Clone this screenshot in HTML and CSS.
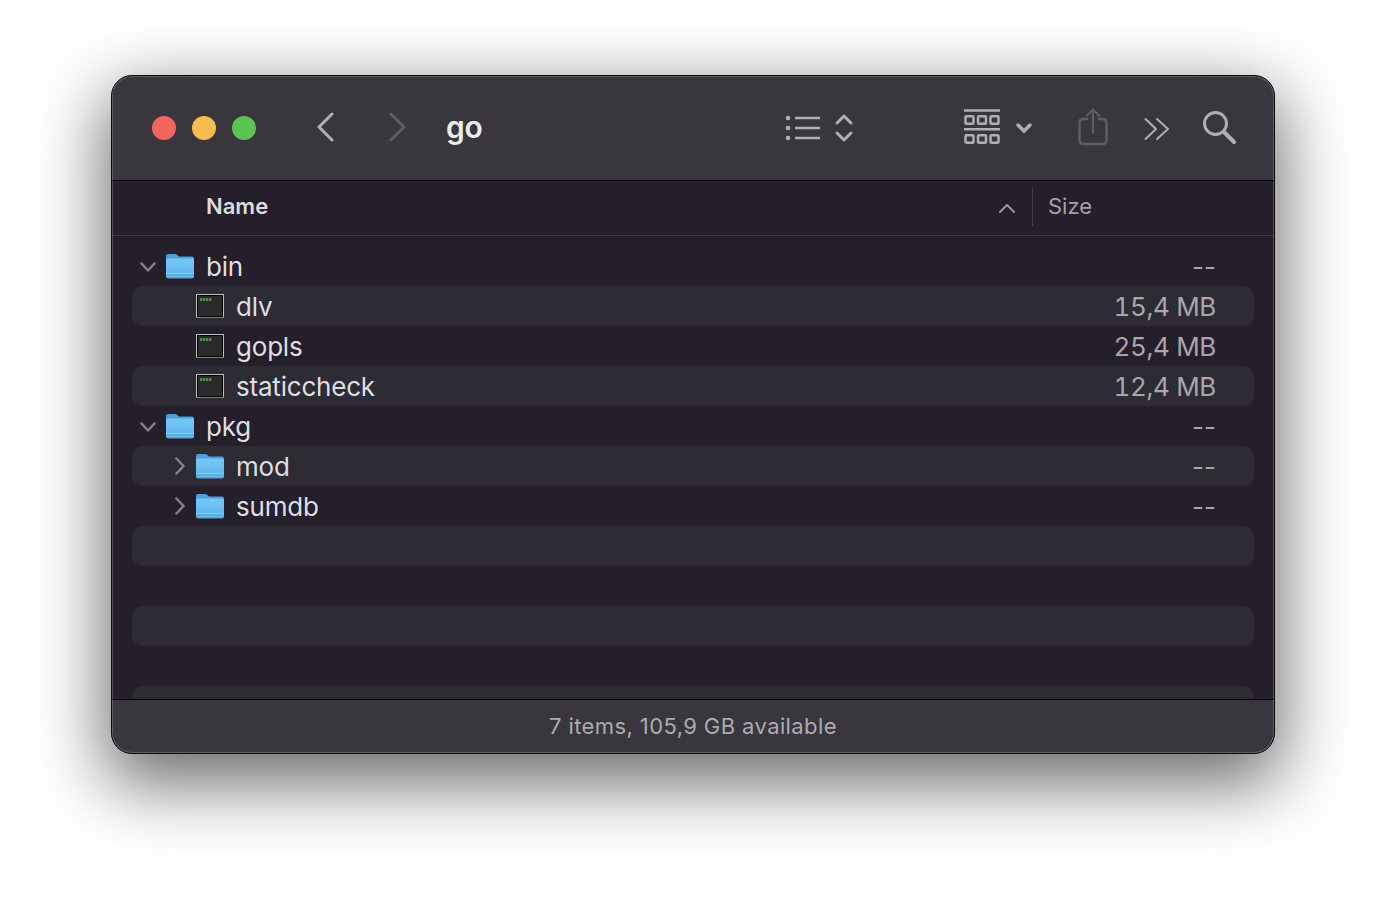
FILE: index.html
```html
<!DOCTYPE html>
<html lang="en">
<head>
<meta charset="utf-8">
<title>go</title>
<link rel="stylesheet" href="styles.css">
</head>
<body>
<svg class="defs" width="0" height="0" aria-hidden="true">
  <defs>
    <linearGradient id="folderBody" x1="0" y1="0" x2="0" y2="1">
      <stop offset="0" stop-color="#76c8f6"/>
      <stop offset="0.7" stop-color="#64b9ed"/>
      <stop offset="1" stop-color="#4f9fd9"/>
    </linearGradient>
    <symbol id="folder" viewBox="0 0 28 26">
      <path d="M0 3q0-2 2-2h7q1.500 0 2.500 1l1.500 1.500h13q2 0 2 2V8H0z" fill="#4a9fdc"/>
      <path d="M0 7q0-1.500 1.500-1.500h25q1.500 0 1.500 1.500v16.500q0 2-2 2H2q-2 0-2-2z" fill="url(#folderBody)"/>
      <rect x="0" y="20" width="28" height="1" fill="#a2d8f6" opacity=".55"/>
      <rect x="0" y="23" width="28" height="1" fill="#a2d8f6" opacity=".35"/>
    </symbol>
    <symbol id="exec" viewBox="0 0 28 24">
      <rect width="28" height="24" fill="#bdbdbf"/>
      <rect y="23" width="28" height="1" fill="#7d7d7f"/>
      <rect x="1" y="1" width="26" height="22" fill="#000"/>
      <rect x="2" y="2" width="24" height="20" fill="#2a2a2a"/>
      <path d="M4 4h2.300v3H4zM7 4h2.300v3H7zM10 4h2.300v3H10zM13 4h2.300v3H13z" fill="#3f9445"/>
    </symbol>
  </defs>
</svg>
<main class="window">
  <header class="toolbar">
    <div class="lights">
      <span class="light red"></span>
      <span class="light yellow"></span>
      <span class="light green"></span>
    </div>
    <svg class="icon nav-back" width="18" height="30" viewBox="0 0 18 30"><path d="M16 2 3 15l13 13" class="stroke s3"/></svg>
    <svg class="icon nav-forward" width="18" height="30" viewBox="0 0 18 30"><path d="m2 2 13 13L2 28" class="stroke s3 dim"/></svg>
    <h1 class="title">go</h1>
    <svg class="icon view-list" width="36" height="26" viewBox="0 0 36 26"><circle cx="3" cy="3" r="2.300" class="fill"/><circle cx="3" cy="13" r="2.300" class="fill"/><circle cx="3" cy="23" r="2.300" class="fill"/><path d="M10 3h25M10 13h25M10 23h25" class="stroke s25 butt"/></svg>
    <svg class="icon updown" width="18" height="30" viewBox="0 0 18 30"><path d="m2 10 7-7 7 7M2 20l7 7 7-7" class="stroke s3"/></svg>
    <svg class="icon group" width="36" height="36" viewBox="0 0 36 36"><path d="M0 1.500h36M0 20.300h36" class="stroke s25 butt"/><g class="stroke s25"><rect x="1.500" y="7.250" width="8" height="7.500" rx="1"/><rect x="14" y="7.250" width="8" height="7.500" rx="1"/><rect x="26.500" y="7.250" width="8" height="7.500" rx="1"/><rect x="1.500" y="26.250" width="8" height="7.500" rx="1"/><rect x="14" y="26.250" width="8" height="7.500" rx="1"/><rect x="26.500" y="26.250" width="8" height="7.500" rx="1"/></g></svg>
    <svg class="icon group-caret" width="16" height="12" viewBox="0 0 16 12"><path d="m2 3 6 6 6-6" class="stroke s35"/></svg>
    <svg class="icon share" width="30" height="38" viewBox="0 0 30 38"><path d="M9 11H5.500q-4 0-4 4v17q0 4 4 4h19q4 0 4-4V15q0-4-4-4H21" class="stroke s25 dim"/><path d="M15 25V2M8.500 8 15 1.500 21.500 8" class="stroke s2 dim"/></svg>
    <svg class="icon more" width="26" height="24" viewBox="0 0 26 24"><path d="M1.500 2 12 12 1.500 22M13 2l11 10-11 10" class="stroke s2"/></svg>
    <svg class="icon search" width="34" height="34" viewBox="0 0 34 34"><circle cx="12.500" cy="12.500" r="11" class="stroke s3"/><path d="m21 21 10 10" class="stroke s4"/></svg>
  </header>

  <div class="columns">
    <span class="col-name">Name</span>
    <svg class="sort" width="16" height="10" viewBox="0 0 16 10"><path d="m1 9 7-7 7 7" class="stroke s2 mid"/></svg>
    <span class="col-divider"></span>
    <span class="col-size">Size</span>
  </div>

  <div class="list">
    <div class="row">
      <svg class="twist" width="16" height="12" viewBox="0 0 16 12"><path d="m1.500 2.500 6.500 7 6.500-7" class="stroke s25 soft"/></svg>
      <svg class="file-icon" width="28" height="26"><use href="#folder"/></svg>
      <span class="name">bin</span><span class="size">--</span>
    </div>
    <div class="row zebra">
      <span class="twist-space"></span>
      <svg class="file-icon" width="28" height="24"><use href="#exec"/></svg>
      <span class="name">dlv</span><span class="size num">15,4 MB</span>
    </div>
    <div class="row">
      <span class="twist-space"></span>
      <svg class="file-icon" width="28" height="24"><use href="#exec"/></svg>
      <span class="name">gopls</span><span class="size num">25,4 MB</span>
    </div>
    <div class="row zebra">
      <span class="twist-space"></span>
      <svg class="file-icon" width="28" height="24"><use href="#exec"/></svg>
      <span class="name">staticcheck</span><span class="size num">12,4 MB</span>
    </div>
    <div class="row">
      <svg class="twist" width="16" height="12" viewBox="0 0 16 12"><path d="m1.500 2.500 6.500 7 6.500-7" class="stroke s25 soft"/></svg>
      <svg class="file-icon" width="28" height="26"><use href="#folder"/></svg>
      <span class="name">pkg</span><span class="size">--</span>
    </div>
    <div class="row zebra">
      <svg class="twist-side" width="12" height="18" viewBox="0 0 12 18"><path d="m2.500 1.500 7 7.500-7 7.500" class="stroke s25 soft"/></svg>
      <svg class="file-icon" width="28" height="26"><use href="#folder"/></svg>
      <span class="name">mod</span><span class="size">--</span>
    </div>
    <div class="row">
      <svg class="twist-side" width="12" height="18" viewBox="0 0 12 18"><path d="m2.500 1.500 7 7.500-7 7.500" class="stroke s25 soft"/></svg>
      <svg class="file-icon" width="28" height="26"><use href="#folder"/></svg>
      <span class="name">sumdb</span><span class="size">--</span>
    </div>
    <div class="row zebra"></div>
    <div class="row"></div>
    <div class="row zebra"></div>
    <div class="row"></div>
    <div class="row zebra"></div>
  </div>

  <footer class="status">7 items, 105,9 GB available</footer>
</main>
</body>
</html>
```

FILE: styles.css
```css
* { box-sizing: border-box; }

html, body { margin: 0; height: 100%; background: #fff; overflow: hidden; }

body {
  padding: 75px 111px 0;
  font-family: Inter, "Liberation Sans", sans-serif;
}

.defs { position: absolute; }

.window {
  width: 1164px;
  height: 679px;
  display: flex;
  flex-direction: column;
  background: #241f2a;
  border: 1px solid #0a0a0a;
  border-radius: 21px;
  overflow: hidden;
  box-shadow: 0 24px 70px 6px rgba(0, 0, 0, .58);
  position: relative;
}

.window::after {
  content: "";
  position: absolute;
  inset: 0;
  border-radius: 20px;
  box-shadow: inset 0 0 0 1px rgba(255, 255, 255, .2);
  pointer-events: none;
}

.toolbar {
  flex: none;
  height: 105px;
  display: flex;
  align-items: center;
  padding-left: 40px;
  background: #39363d;
  border-bottom: 1px solid #000;
}

.lights { display: flex; gap: 16px; }
.light { width: 24px; height: 24px; border-radius: 50%; }
.red { background: #f1675c; }
.yellow { background: #f5bd4f; }
.green { background: #5ac451; }

.icon { flex: none; display: block; }
.stroke { fill: none; stroke: #b1afb3; stroke-linecap: round; stroke-linejoin: round; }
.fill { fill: #b1afb3; }
.butt { stroke-linecap: butt; }
.s2 { stroke-width: 2; }
.s25 { stroke-width: 2.500; }
.s3 { stroke-width: 3; }
.s35 { stroke-width: 3.500; }
.s4 { stroke-width: 4; }
.dim { stroke: #5f5d63; }
.mid { stroke: #98969b; }
.soft { stroke: #848287; }

.nav-back { margin-left: 60px; margin-top: -2px; }
.nav-forward { margin-left: 55px; margin-top: -2px; }

.title {
  margin: -2px 0 0 39px;
  width: 339px;
  font-size: 30px;
  font-weight: 600;
  line-height: 36px;
  color: #ebebec;
  letter-spacing: -.3px;
}

.updown { margin-left: 14px; }
.group { margin-left: 111px; margin-top: -2px; }
.group-caret { margin-left: 16px; }
.share { margin-left: 46px; margin-top: -3px; }
.more { margin-left: 36px; margin-top: 2px; }
.search { margin-left: 33px; }

.columns {
  flex: none;
  height: 55px;
  display: flex;
  align-items: center;
  padding-left: 94px;
  border-bottom: 1px solid #3d3a42;
  font-size: 22px;
}

.col-name { font-weight: 600; color: #dcdbde; width: 793px; margin-top: -4px; }
.sort { flex: none; }
.col-divider { width: 1px; height: 38px; margin: -2px 0 0 17px; background: #3d3a42; }
.col-size { margin: -4px 0 0 15px; color: #a4a2a7; }

.list {
  flex: 1;
  min-height: 0;
  overflow: hidden;
  padding: 10px 20px 0;
}

.row {
  height: 40px;
  display: flex;
  align-items: center;
  padding-right: 38px;
  border-radius: 10px;
  font-size: 26px;
  color: #dfdee0;
}

.zebra { background: #2d2b34; }

.twist { flex: none; margin: 2px 0 0 8px; }
.twist-side { flex: none; margin-left: 42px; }
.twist-space { flex: none; width: 54px; }
.file-icon { flex: none; margin-left: 10px; }

.name { margin-left: 12px; letter-spacing: -.2px; }

.size {
  margin-left: auto;
  color: #a8a6ab;
}

.num {
  font-variant-numeric: tabular-nums;
  letter-spacing: -.35px;
}

.status {
  flex: none;
  height: 54px;
  display: flex;
  align-items: center;
  justify-content: center;
  padding-bottom: 2px;
  background: #39363d;
  border-top: 1px solid #000;
  font-size: 22px;
  letter-spacing: .4px;
  color: #adabb0;
}
```
